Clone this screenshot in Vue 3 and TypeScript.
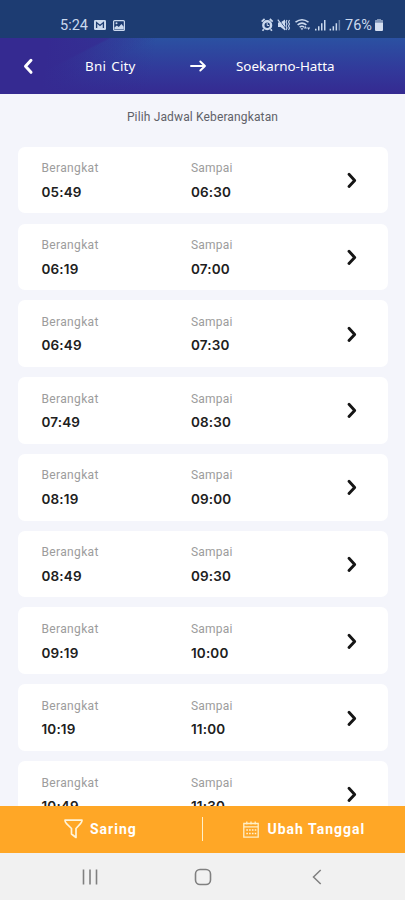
<script setup lang="ts">
interface Trip {
  depart: string
  arrive: string
}

const trips: Trip[] = [
  { depart: '05:49', arrive: '06:30' },
  { depart: '06:19', arrive: '07:00' },
  { depart: '06:49', arrive: '07:30' },
  { depart: '07:49', arrive: '08:30' },
  { depart: '08:19', arrive: '09:00' },
  { depart: '08:49', arrive: '09:30' },
  { depart: '09:19', arrive: '10:00' },
  { depart: '10:19', arrive: '11:00' },
  { depart: '10:49', arrive: '11:30' },
]
</script>

<template>
  <div class="screen">
    <div class="status">
      <span class="clock">5:24</span>
      <svg class="mail" width="12" height="10" viewBox="0 0 12 10">
        <rect width="12" height="10" rx="1.2" fill="#cbd9ee" />
        <path d="M2.600 8V2.600L6 5.400l3.400-2.800V8" fill="none" stroke="#1d3c72" stroke-width="1.300" />
      </svg>
      <svg class="photo" width="12" height="11" viewBox="0 0 12 11">
        <rect x=".6" y=".6" width="10.800" height="9.800" rx="1" fill="none" stroke="#cbd9ee" stroke-width="1.200" />
        <path d="M1.500 9.200V7.400l2.300-2 2 1.700 2.600-3 2.300 2.600v2.500z" fill="#cbd9ee" />
        <circle cx="3.500" cy="3.200" r="1" fill="#cbd9ee" />
      </svg>
      <svg class="indicators" width="82" height="16" viewBox="0 0 82 16">
        <g fill="none" stroke="#cbd9ee">
          <circle cx="6.200" cy="8.200" r="3.900" stroke-width="2.400" />
          <path d="M.7 4.600 3.600 2M11.700 4.600 8.800 2M2.800 12.300l-1.300 1.500M9.600 12.300l1.300 1.500" stroke-width="1.700" />
          <path d="M6.200 5.800v2.700h2" stroke-width="1" />
        </g>
        <path d="M17 5.500h2.500L24 2.500v11l-4.500-3.500H17z" fill="#cbd9ee" />
        <path d="M17.800 2.300 25 12.300" stroke="#1d3c72" stroke-width="1" />
        <path d="m16.800 2.700 7.500 10" stroke="#cbd9ee" stroke-width="1.200" />
        <path d="m26 3-1 2 1 2-1 2 1 2-1 2M28.500 3l-1 2 1 2-1 2 1 2-1 2" fill="none" stroke="#cbd9ee" stroke-width="1.100" />
        <g fill="none" stroke="#cbd9ee" stroke-width="1.600">
          <path d="M34.500 5.200q6.500-4.800 13 0M36.600 7.800q4.400-3.400 8.800 0M38.600 10.200q2.400-1.800 4.600 0" />
        </g>
        <path d="m39.500 11.300 1.500 2 1.300-2z" fill="#cbd9ee" />
        <path d="m42.800 11.500 1.600-2.500 1.600 2.500zM46 10.500h3.200l-1.600 2.500z" fill="#cbd9ee" />
        <g fill="#cbd9ee">
          <path d="M54 11.700h1.500v1.800H54zM57 9.200h1.500v4.300H57zM60 6.200h1.500v7.300H60zM63 3h1.500v10.500H63z" />
          <path d="M68.600 11.700h1.500v1.800h-1.500zM71.600 9.200h1.500v4.300h-1.500zM74.600 6.200h1.500v7.300h-1.500z" />
          <path d="M77.600 3h1.500v10.500h-1.500z" opacity=".45" />
        </g>
      </svg>
      <span class="percent">76%</span>
      <svg class="battery" width="8" height="12" viewBox="0 0 8 12">
        <path d="M2.500 0h3v1.200H7q1 0 1 1V11q0 1-1 1H1q-1 0-1-1V2.200q0-1 1-1h1.500z" fill="#d5dff0" />
        <path d="M0 2.200q0-1 1-1h1.500V0h3v1.200H7q1 0 1 1v1.600H0z" fill="#8296b8" />
      </svg>
    </div>

    <header class="header">
      <svg class="back" width="12" height="18" viewBox="0 0 12 18">
        <path d="M9 3.300 3.500 9.300 9 15.300" fill="none" stroke="#fff" stroke-width="3" stroke-linecap="round" stroke-linejoin="round" />
      </svg>
      <span class="from">Bni City</span>
      <svg class="arrow" width="17" height="12" viewBox="0 0 17 12">
        <path d="M1 6h14M10.300 1.500 15 6l-4.700 4.500" fill="none" stroke="#fff" stroke-width="1.900" stroke-linecap="round" stroke-linejoin="round" />
      </svg>
      <span class="to">Soekarno-Hatta</span>
    </header>

    <main class="content">
      <h1 class="title">Pilih Jadwal Keberangkatan</h1>
      <div class="list">
        <article v-for="trip in trips" :key="trip.depart" class="card">
          <div class="stop">
            <span class="label">Berangkat</span>
            <span class="time">{{ trip.depart }}</span>
          </div>
          <div class="stop">
            <span class="label sampai">Sampai</span>
            <span class="time">{{ trip.arrive }}</span>
          </div>
          <svg class="chevron" width="12" height="18" viewBox="0 0 12 18">
            <path d="M3 3.300 8.700 9.400 3 15.500" fill="none" stroke="#151515" stroke-width="2.900" stroke-linecap="round" stroke-linejoin="round" />
          </svg>
        </article>
      </div>
    </main>

    <div class="actions">
      <button class="action filter">
        <svg width="19" height="20" viewBox="0 0 19 20">
          <path d="M1 1.200h17q0 2-1.500 3.500L12 9.500v9L7.500 15V9.500L2.500 4.700Q1 3.200 1 1.200z" fill="none" stroke="#fff4d8" stroke-width="1.700" stroke-linejoin="round" />
        </svg>
        <span>Saring</span>
      </button>
      <i class="divider"></i>
      <button class="action date">
        <svg width="16" height="17" viewBox="0 0 16 17">
          <path d="M.8 2.500h14.400v13.700H.8zM.8 5.800h14.400M3.800.5v3M8 .5v3M12.200.5v3" fill="none" stroke="#fff0c8" stroke-width="1.300" />
          <path d="M3.300 9h10.200M3.300 12.500h10.200" fill="none" stroke="#fff4d8" stroke-width="1.500" stroke-dasharray="1.600 1.200" />
        </svg>
        <span>Ubah Tanggal</span>
      </button>
    </div>

    <nav class="nav">
      <svg width="16" height="16" viewBox="0 0 16 16"><path d="M1.500.5v15M8 .5v15M14.500.5v15" stroke="#808080" stroke-width="1.600" /></svg>
      <svg class="home" width="18" height="18" viewBox="0 0 18 18"><rect x="1.500" y="1.500" width="15" height="15" rx="4.500" fill="none" stroke="#808080" stroke-width="1.600" /></svg>
      <svg width="10" height="16" viewBox="0 0 10 16"><path d="M8.700 1 1.500 8l7.200 7" fill="none" stroke="#808080" stroke-width="1.500" /></svg>
    </nav>
  </div>
</template>

<style>
body {
  margin: 0;
  overflow: hidden;
}
</style>

<style scoped>
.screen {
  display: flex;
  flex-direction: column;
  width: 405px;
  height: 900px;
  overflow: hidden;
  background: #f4f5fb;
  font-family: Roboto, sans-serif;
}
svg {
  display: block;
  flex: none;
}
span {
  white-space: nowrap;
}
.status {
  display: flex;
  align-items: center;
  flex: none;
  box-sizing: border-box;
  height: 38px;
  padding: 12px 0 0 60px;
  background: #1d3c72;
  color: #cbd9ee;
  font-size: 14.500px;
}
.clock {
  width: 34px;
}
.photo {
  margin-left: 7px;
}
.indicators {
  margin-left: 135.500px;
}
.percent {
  width: 30px;
  margin-left: 2.500px;
}
.battery {
  margin-left: -.5px;
}
.header {
  display: flex;
  align-items: center;
  flex: none;
  box-sizing: border-box;
  height: 55.500px;
  padding-left: 22px;
  background:
    linear-gradient(153deg, rgba(53, 42, 145, .75) 0 49px, rgba(53, 42, 145, .3) 51px, transparent 72px),
    linear-gradient(100deg, #352a91 0 12%, rgba(53, 42, 145, .4) 24%, transparent 38%),
    linear-gradient(#2b51a2, #32389a 60%, #352a91);
  color: #fff;
  font: 13.400px "Noto Sans", sans-serif;
}
.from {
  width: 105px;
  margin-left: 51px;
  letter-spacing: .2px;
  word-spacing: 1.500px;
}
.arrow {
  margin-left: -.5px;
}
.to {
  margin-left: 29.500px;
}
.content {
  flex: 1;
  min-height: 0;
  overflow: hidden;
}
.title {
  height: 16px;
  margin: 15px 0 22.300px;
  color: #606168;
  font-size: 12px;
  font-weight: 400;
  line-height: 16px;
  letter-spacing: .14px;
  text-align: center;
}
.list {
  display: flex;
  flex-direction: column;
  gap: 10.200px;
  padding: 0 17.500px;
}
.card {
  display: grid;
  grid-template-columns: 149.500px 1fr 12px;
  align-items: center;
  flex: none;
  box-sizing: border-box;
  height: 66.600px;
  padding: 0 30px 0 24px;
  border-radius: 7px;
  background: #fff;
}
.stop {
  display: flex;
  flex-direction: column;
  gap: 7.600px;
}
.label {
  color: #9c9c9c;
  font-size: 12px;
  line-height: 16px;
  letter-spacing: .35px;
}
.sampai {
  letter-spacing: .2px;
}
.time {
  color: #202020;
  font: 600 13.500px/16px Inter, sans-serif;
  letter-spacing: .15px;
}
.actions {
  display: flex;
  align-items: center;
  flex: none;
  height: 47.500px;
  background: #ffa726;
}
.action {
  display: flex;
  align-items: center;
  gap: 7px;
  padding: 0;
  border: 0;
  background: none;
  color: #fff;
  font: 700 14px Roboto, sans-serif;
  letter-spacing: 1px;
}
.filter {
  width: 137.500px;
  margin-left: 64px;
}
.divider {
  width: 1.500px;
  height: 24px;
  background: #fff0c8;
}
.date {
  margin-left: 40px;
  gap: 8.500px;
}
.nav {
  display: flex;
  align-items: center;
  flex: none;
  box-sizing: border-box;
  height: 47px;
  padding: 0 83.500px 0 82px;
  background: #f1f1f1;
  justify-content: space-between;
}
.home {
  margin-right: 4px;
}
</style>
